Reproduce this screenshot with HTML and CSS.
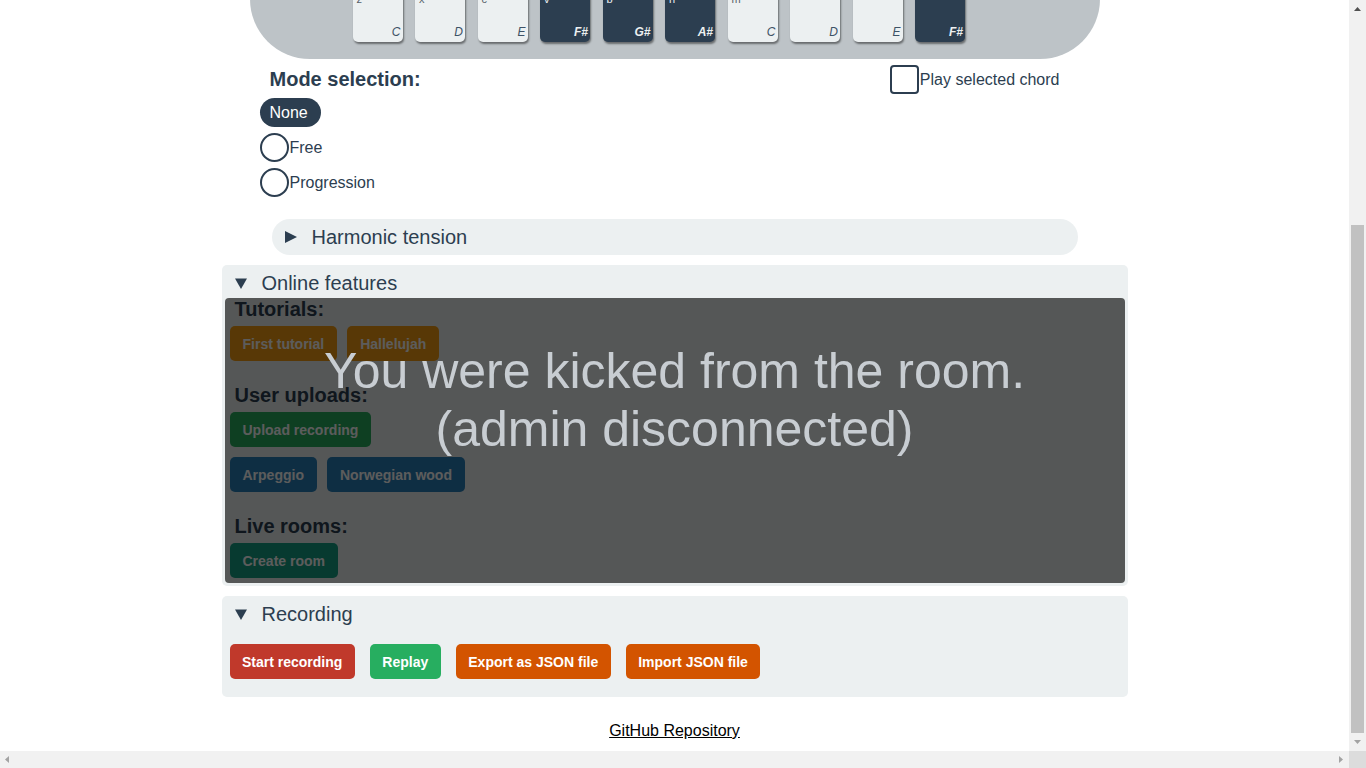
FILE: index.html
```html
<!DOCTYPE html>
<html lang="en">
<head>
<meta charset="utf-8">
<title>Chord piano</title>
<link rel="stylesheet" href="styles.css">
</head>
<body>
<main class="page">
  <section class="piano">
    <div class="keys">
      <div class="key white"><span class="bind">z</span><span class="note">C</span></div>
      <div class="key white"><span class="bind">x</span><span class="note">D</span></div>
      <div class="key white"><span class="bind">c</span><span class="note">E</span></div>
      <div class="key black"><span class="bind">v</span><span class="note">F#</span></div>
      <div class="key black"><span class="bind">b</span><span class="note">G#</span></div>
      <div class="key black"><span class="bind">n</span><span class="note">A#</span></div>
      <div class="key white"><span class="bind">m</span><span class="note">C</span></div>
      <div class="key white"><span class="bind"></span><span class="note">D</span></div>
      <div class="key white"><span class="bind"></span><span class="note">E</span></div>
      <div class="key black"><span class="bind"></span><span class="note">F#</span></div>
    </div>
  </section>

  <section class="controls">
    <div class="mode">
      <h2 class="mode-title">Mode selection:</h2>
      <div class="mode-options">
        <label class="option"><span class="pill">None</span></label>
        <label class="option"><span class="circle"></span>Free</label>
        <label class="option"><span class="circle"></span>Progression</label>
      </div>
    </div>
    <label class="chord-toggle"><span class="checkbox"></span>Play selected chord</label>
  </section>

  <details class="panel pill-panel">
    <summary><svg class="marker" width="12" height="12" viewBox="0 0 12 12"><polygon points="0,0 12,6 0,12"/></svg>Harmonic tension</summary>
  </details>

  <details class="panel" open>
    <summary><svg class="marker" width="12" height="12" viewBox="0 0 12 12"><polygon points="0,0.5 12,0.5 6,11"/></svg>Online features</summary>
    <div class="online">
      <div class="group">
        <h3>Tutorials:</h3>
        <div class="btn-row">
          <button class="btn orange">First tutorial</button>
          <button class="btn orange">Hallelujah</button>
        </div>
      </div>
      <div class="group">
        <h3>User uploads:</h3>
        <div class="btn-row">
          <button class="btn green">Upload recording</button>
        </div>
        <div class="btn-row">
          <button class="btn blue">Arpeggio</button>
          <button class="btn blue">Norwegian wood</button>
        </div>
      </div>
      <div class="group">
        <h3>Live rooms:</h3>
        <div class="btn-row">
          <button class="btn teal">Create room</button>
        </div>
      </div>
      <div class="overlay">
        <p class="overlay-msg">You were kicked from the room.<br>(admin disconnected)</p>
      </div>
    </div>
  </details>

  <details class="panel" open>
    <summary><svg class="marker" width="12" height="12" viewBox="0 0 12 12"><polygon points="0,0.5 12,0.5 6,11"/></svg>Recording</summary>
    <div class="recording">
      <div class="btn-row wide">
        <button class="btn red">Start recording</button>
        <button class="btn green">Replay</button>
        <button class="btn pumpkin">Export as JSON file</button>
        <button class="btn pumpkin">Import JSON file</button>
      </div>
    </div>
  </details>
</main>
<footer class="footer"><a class="repo-link" href="#">GitHub Repository</a></footer>

<div class="scrollbar-v" aria-hidden="true">
  <svg class="sb-arrow sb-up" width="7" height="4" viewBox="0 0 7 4"><polygon points="3.5,0 7,4 0,4"/></svg>
  <div class="sb-thumb"></div>
  <svg class="sb-arrow sb-down" width="7" height="4" viewBox="0 0 7 4"><polygon points="0,0 7,0 3.5,4"/></svg>
</div>
<div class="scrollbar-h" aria-hidden="true">
  <svg class="sb-arrow sb-left" width="4" height="7" viewBox="0 0 4 7"><polygon points="4,0 4,7 0,3.5"/></svg>
  <svg class="sb-arrow sb-right" width="4" height="7" viewBox="0 0 4 7"><polygon points="0,0 4,3.5 0,7"/></svg>
</div>
<div class="scroll-corner" aria-hidden="true"></div>

<script src="script.js"></script>
</body>
</html>
```

FILE: styles.css
```css
body {
  margin: 0;
  padding: 0 17px 17px 0;
  font-family: "Liberation Sans", Arial, sans-serif;
  color: #2c3e50;
  background: #ffffff;
}

.page {
  width: 906px;
  margin: 0 auto;
  padding-top: 241px;
}

/* Piano */
.piano {
  margin: 0 28px;
  padding: 60px 0 17px 103px;
  background: #bdc3c7;
  border-radius: 60px;
}

.keys {
  display: flex;
  gap: 12.5px;
}

.key {
  width: 50px;
  height: 50px;
  box-sizing: border-box;
  padding: 1px 2px 3px 4px;
  border-radius: 5px;
  display: flex;
  flex-direction: column;
  justify-content: space-between;
  box-shadow: 1px 2px 2px rgba(0, 0, 0, 0.45);
}

.key.white {
  background: #ecf0f1;
  color: #3d5266;
}

.key.black {
  background: #2c3e50;
  color: #ecf0f1;
}

.bind {
  font-size: 11px;
  line-height: 13px;
  height: 13px;
}

.key.white .bind {
  color: #555f69;
}

.note {
  align-self: flex-end;
  font-size: 12px;
  line-height: 14px;
  font-style: italic;
}

.key.black .note {
  font-weight: bold;
}

/* Controls */
.controls {
  display: flex;
  justify-content: space-between;
  align-items: flex-start;
  margin: 9px 28px 0;
  padding: 0 40px 0 10px;
}

.mode-title {
  margin: 0 0 7px 10px;
  font-size: 20px;
  line-height: 23px;
  font-weight: bold;
}

.mode-options {
  display: flex;
  flex-direction: column;
  align-items: flex-start;
  gap: 6px;
}

.option {
  display: flex;
  align-items: center;
  height: 29px;
  font-size: 16px;
}

.pill {
  display: inline-flex;
  align-items: center;
  height: 29px;
  padding: 0 13px 0 10px;
  border-radius: 15px;
  background: #2c3e50;
  color: #ffffff;
}

.circle {
  width: 29px;
  height: 29px;
  box-sizing: border-box;
  border: 2px solid #2c3e50;
  border-radius: 50%;
  margin-right: 1px;
}

.chord-toggle {
  display: flex;
  align-items: center;
  margin-top: -3px;
  font-size: 16px;
  line-height: 26px;
}

.checkbox {
  width: 29px;
  height: 29px;
  box-sizing: border-box;
  border: 2px solid #2c3e50;
  border-radius: 4px;
  margin-right: 1px;
}

/* Panels */
.panel {
  display: flow-root;
  background: #ecf0f1;
  border-radius: 5px;
  margin-bottom: 10px;
}

.pill-panel {
  margin: 22px 50px 10px;
  border-radius: 18px;
}

.panel summary {
  display: flex;
  align-items: center;
  gap: 15px;
  padding: 7px 13px 3px;
  font-size: 20px;
  line-height: 23px;
  list-style: none;
  cursor: pointer;
}

.pill-panel summary {
  padding: 6.5px 13px;
}

.panel summary::-webkit-details-marker {
  display: none;
}

.marker {
  fill: #2c3e50;
  flex: none;
}

.online {
  position: relative;
  margin: 0 3px 3px;
  padding: 0 5px 5px;
}

.group + .group {
  margin-top: 23px;
}

.group h3 {
  margin: 0 0 5px 5px;
  font-size: 20px;
  line-height: 23px;
  font-weight: bold;
}

.btn-row {
  display: flex;
  gap: 10px;
}

.btn-row + .btn-row {
  margin-top: 10px;
}

.btn-row.wide {
  gap: 15px;
}

.btn {
  height: 35px;
  padding: 0 13px;
  border: 0;
  border-radius: 5px;
  color: #ffffff;
  font-family: "Liberation Sans", Arial, sans-serif;
  font-size: 14px;
  font-weight: bold;
  cursor: pointer;
}

.btn-row.wide .btn {
  padding: 0 12.5px;
}

.orange { background: #f39c12; }
.green { background: #27ae60; }
.blue { background: #2980b9; }
.teal { background: #16a085; }
.red { background: #c0392b; }
.pumpkin { background: #d35400; }

.overlay {
  position: absolute;
  inset: 0;
  border-radius: 4px;
  background: rgba(0, 0, 0, 0.64);
  text-align: center;
}

.overlay-msg {
  margin: 0;
  padding-top: 45px;
  font-size: 50px;
  line-height: 57.5px;
  color: #c8cdd2;
}

.recording {
  padding: 15px 8px 18px;
}

/* Footer */
.footer {
  padding: 15px 0 11px;
  text-align: center;
  font-size: 16px;
  line-height: 18px;
}

.repo-link {
  color: #000000;
}

/* Browser scrollbars (drawn over the page) */
.scrollbar-v {
  position: fixed;
  top: 0;
  right: 0;
  width: 17px;
  height: 751px;
  background: #f1f1f1;
}

.sb-thumb {
  position: absolute;
  left: 2px;
  right: 2px;
  top: 225px;
  height: 508px;
  background: #c1c1c1;
}

.sb-arrow {
  position: absolute;
  display: block;
}

.sb-up {
  top: 7px;
  left: 5px;
  fill: #505050;
}

.sb-down {
  top: 740px;
  left: 5px;
  fill: #a3a3a3;
}

.scrollbar-h {
  position: fixed;
  left: 0;
  bottom: 0;
  width: 1349px;
  height: 17px;
  background: #f1f1f1;
}

.sb-left {
  top: 5px;
  left: 5px;
  fill: #a3a3a3;
}

.sb-right {
  top: 5px;
  left: 1339px;
  fill: #a3a3a3;
}

.scroll-corner {
  position: fixed;
  right: 0;
  bottom: 0;
  width: 17px;
  height: 17px;
  background: #dcdcdc;
}
```

FILE: script.js
```js
function toBottom() {
  window.scrollTo(0, document.documentElement.scrollHeight);
}
toBottom();
window.addEventListener('load', toBottom);
```
